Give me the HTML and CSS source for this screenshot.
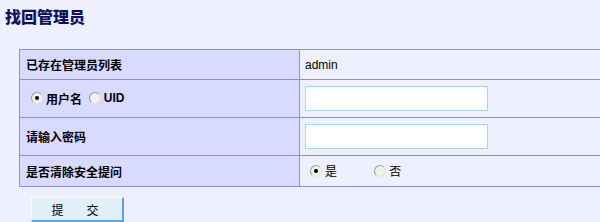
FILE: index.html
```html
<!DOCTYPE html>
<html lang="zh-CN">
<head>
    <meta charset="UTF-8">
    <title>找回管理员</title>
    <link rel="stylesheet" href="styles.css">
</head>
<body>
<h2 class="title">找回管理员</h2>

<form class="box" action="#">
    <table class="tb">
        <tr class="r1">
            <td class="label">已存在管理员列表</td>
            <td class="val">admin</td>
        </tr>
        <tr class="r2">
            <td class="label">
                <label class="pick"><input type="radio" name="by" checked>用户名</label>
                <label class="pick"><input type="radio" name="by">UID</label>
            </td>
            <td class="val"><input class="txt" type="text"></td>
        </tr>
        <tr class="r2">
            <td class="label">请输入密码</td>
            <td class="val"><input class="txt" type="password"></td>
        </tr>
        <tr class="r4">
            <td class="label">是否清除安全提问</td>
            <td class="val">
                <label class="opt"><input type="radio" name="clear" checked>是</label>
                <label class="opt"><input type="radio" name="clear">否</label>
            </td>
        </tr>
    </table>
    <button class="btn" type="submit"><span>提</span><span>交</span></button>
</form>
</body>
</html>
```

FILE: styles.css
```css
*{
    margin:0;
    padding:0;
}

body{
    background:#eef0fe;
    font-family:"Liberation Sans","Noto Sans CJK SC",sans-serif;
    font-size:12px;
    color:#000;
    overflow:hidden;
}

.title{
    font-family:"Noto Sans CJK SC",sans-serif;
    font-size:16px;
    line-height:20px;
    font-weight:900;
    color:#10105e;
    padding:6px 0 0 5px;
    height:43px;
}

.box{
    padding-left:19px;
}

.tb{
    width:600px;
    border-collapse:collapse;
}
.tb td{
    border:1px solid #8c8cf0;
    padding:0;
}
.r1 td{ height:29px; }
.r2 td{ height:37px; }
.r4 td{ height:30px; }

.label{
    width:273px;
    background:#d8daff;
    font-family:"Noto Sans CJK SC",sans-serif;
    font-weight:bold;
    padding-left:6px !important;
}
.val{
    padding-left:5px !important;
}

.pick{
    margin-left:5px;
    display:inline-flex;
    align-items:center;
    gap:3px;
}
.pick + .pick{
    margin-left:4px;
}
.pick:last-child{
    font-family:"Liberation Sans",sans-serif;
}

.opt{
    display:inline-flex;
    align-items:center;
    gap:3px;
    font-family:"Noto Sans CJK SC",sans-serif;
    margin-left:5px;
    margin-right:29px;
}

input[type=radio]{
    appearance:none;
    width:12px;
    height:12px;
    border-radius:50%;
    border:1px solid #8e99a6;
    border-right-color:#dfe3e8;
    border-bottom-color:#dfe3e8;
    background:#f2f2ea;
    position:relative;
}
input[type=radio]:checked::after{
    content:"";
    position:absolute;
    left:3px;
    top:3px;
    width:4px;
    height:4px;
    border-radius:50%;
    background:#000;
}

.txt{
    width:183px;
    height:25px;
    box-sizing:border-box;
    border:1px solid #acd4ec;
    background:#fff;
    display:block;
}

.btn{
    margin:10px 0 0 12px;
    width:93px;
    height:25px;
    display:flex;
    justify-content:center;
    align-items:center;
    gap:23px;
    padding-right:4px;
    background:#e2eef8;
    border:1px solid #fff;
    border-right:2px solid #5ea4e4;
    border-bottom:2px solid #5ea4e4;
    font-family:"Noto Sans CJK SC",sans-serif;
    font-size:12px;
    color:#000;
}
```
